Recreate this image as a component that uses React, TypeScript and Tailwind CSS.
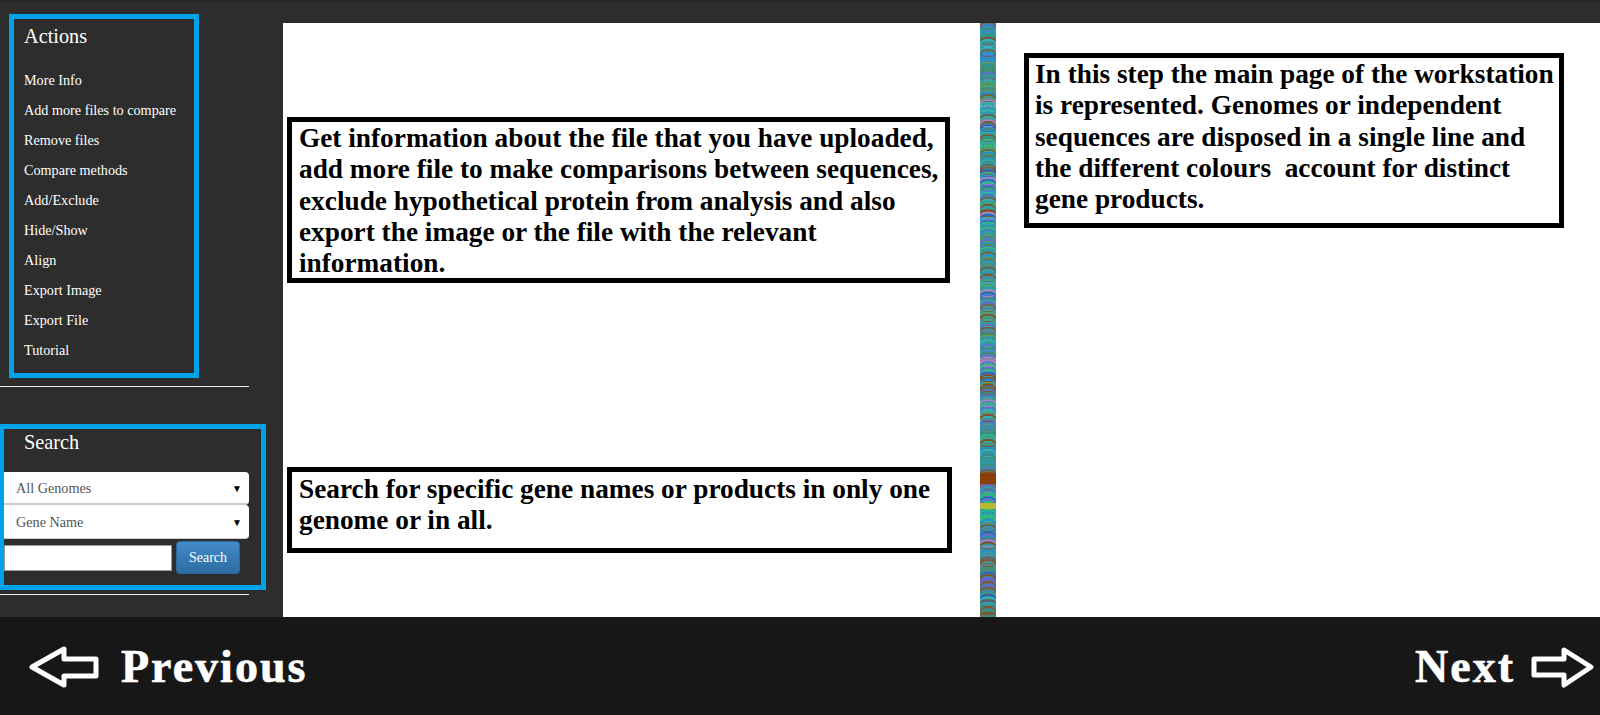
import React from 'react';

const ACTIONS = ['More Info', 'Add more files to compare', 'Remove files', 'Compare methods', 'Add/Exclude', 'Hide/Show', 'Align', 'Export Image', 'Export File', 'Tutorial'];

const PALETTE = ['#2a9fb5', '#3f8f7a', '#7a5a3a', '#2fb8c9', '#4a78d0', '#5aa05a', '#8a4a1a', '#38b0a0', '#6a6ad8', '#2a9fb5', '#2a5fd0', '#30c080', '#3f8f7a', '#c080d0', '#2090e0', '#509090', '#7a5a3a', '#2a9fb5'];

// the genome strip is a long stack of thin coloured discs
const GenomeStrip = () => {
  const discs: { y: number; color: string }[] = [];
  let seed = 11;
  for (let y = -2; y < 594; y += 2.5) {
    seed = (seed * 1664525 + 1013904223) % 2147483648;
    discs.push({ y, color: PALETTE[Math.floor(seed / 65536) % PALETTE.length] });
  }
  return (
    <svg width="16" height="594" viewBox="0 0 16 594" className="block">
      <rect width="16" height="594" fill="#4a8078" />
      {discs.map((d) => (
        <ellipse key={d.y} cx="8" cy={d.y} rx="8" ry="3.5" stroke={d.color} strokeWidth="1.4" fill="none" />
      ))}
      <rect y="450" width="16" height="11" fill="#8a3f0a" />
      <rect y="480" width="16" height="6" fill="#b8b830" />
    </svg>
  );
};

const ArrowLeft = () => (
  <svg width="72" height="44" viewBox="0 0 72 44" fill="none" stroke="#fff" strokeWidth="5" strokeLinejoin="round" className="block">
    <path d="M4 23 L36 5 L36 15 L68 15 L68 32 L36 32 L36 41 Z" />
  </svg>
);

const ArrowRight = () => (
  <svg width="66" height="44" viewBox="0 0 66 44" fill="none" stroke="#fff" strokeWidth="5" strokeLinejoin="round" className="block">
    <path d="M4 15 L34 15 L34 6 L61 23 L34 41 L34 31 L4 31 Z" />
  </svg>
);

const NoteBox = ({ className, children }: { className: string; children: React.ReactNode }) => (
  <div className={`border-[5px] border-black bg-white font-bold text-black text-[27.3px] leading-[31.25px] whitespace-nowrap ${className}`}>{children}</div>
);

const App: React.FC = () => {
  return (
    <div className="w-[1600px] h-[715px] flex flex-col overflow-hidden font-['Liberation_Serif',serif]">
      <div className="flex-1 flex min-h-0 bg-[#2d2d2d] border-t-2 border-[#262626]">
        {/* Sidebar */}
        <aside className="w-[283px] shrink-0 text-white">
          <div className="ml-[9px] mt-[12px] w-[190px] h-[364px] border-[5px] border-[#00a2e8] pl-[10px]">
            <h3 className="text-[20.3px] leading-[22px] mt-[6px]">Actions</h3>
            <ul className="mt-[18px] flex flex-col">
              {ACTIONS.map((a) => (
                <li key={a} className="text-[14.2px] leading-[30px] whitespace-nowrap">{a}</li>
              ))}
            </ul>
          </div>
          <hr className="mt-[8px] w-[249px] border-t border-[#eee]" />
          <div className="mt-[37px] w-[266px] h-[166px] border-[5px] border-l-[4px] border-[#00a2e8]">
            <h3 className="text-[20.3px] leading-[22px] ml-[20px] mt-[2px]">Search</h3>
            <div className="mt-[19px] w-[245px] flex flex-col">
              <div className="h-[33px] bg-white rounded-r-[4px] flex items-center justify-between pl-[12px] pr-[7px] pt-[2px] text-[14.2px] text-[#555] border-b-2 border-[#ccc]">
                <span>All Genomes</span>
                <span className="text-black text-[10px]">▼</span>
              </div>
              <div className="h-[34px] bg-white rounded-r-[4px] flex items-center justify-between pl-[12px] pr-[7px] pt-[2px] text-[14.2px] text-[#555] border-b border-[#ccc]">
                <span>Gene Name</span>
                <span className="text-black text-[10px]">▼</span>
              </div>
            </div>
            <div className="flex items-center gap-[4px] mt-[2px]">
              <div className="w-[168px] h-[26px] bg-white border border-[#999]" />
              <button className="w-[64px] h-[33px] rounded bg-[#337ab7] bg-gradient-to-b from-[#428bca] to-[#2d6ca2] border border-[#2b669a] text-white text-[14px]">Search</button>
            </div>
          </div>
          <hr className="mt-[4px] w-[249px] border-t border-[#eee]" />
        </aside>

        {/* Main */}
        <main className="flex-1 flex bg-white mt-[21px] min-w-0">
          <div className="w-[697px] shrink-0 pl-[4px]">
            <NoteBox className="mt-[94px] w-[663px] h-[166px] pl-[7px] pt-[1px]">
              Get information about the file that you have uploaded,<br />
              add more file to make comparisons between sequences,<br />
              exclude hypothetical protein from analysis and also<br />
              export the image or the file with the relevant<br />
              information.
            </NoteBox>
            <NoteBox className="mt-[184px] w-[665px] h-[86px] pl-[7px] pt-[2px]">
              Search for specific gene names or products in only one<br />
              genome or in all.
            </NoteBox>
          </div>
          <GenomeStrip />
          <div className="flex-1 pl-[28px]">
            <NoteBox className="mt-[30px] w-[540px] h-[175px] pl-[6px] pt-[1px]">
              In this step the main page of the workstation<br />
              is represented. Genomes or independent<br />
              sequences are disposed in a single line and<br />
              the different colours&nbsp; account for distinct<br />
              gene products.
            </NoteBox>
          </div>
        </main>
      </div>

      {/* Tutorial navigation */}
      <footer className="h-[98px] shrink-0 bg-[#171717] flex items-center justify-between text-white font-bold text-[46px] tracking-[2px] [-webkit-text-stroke:0.6px_white]">
        <div className="flex items-center gap-[21px] pl-[28px]">
          <ArrowLeft />
          <span>Previous</span>
        </div>
        <div className="flex items-center gap-[15px] pr-[4px]">
          <span>Next</span>
          <ArrowRight />
        </div>
      </footer>
    </div>
  );
};

export default App;
